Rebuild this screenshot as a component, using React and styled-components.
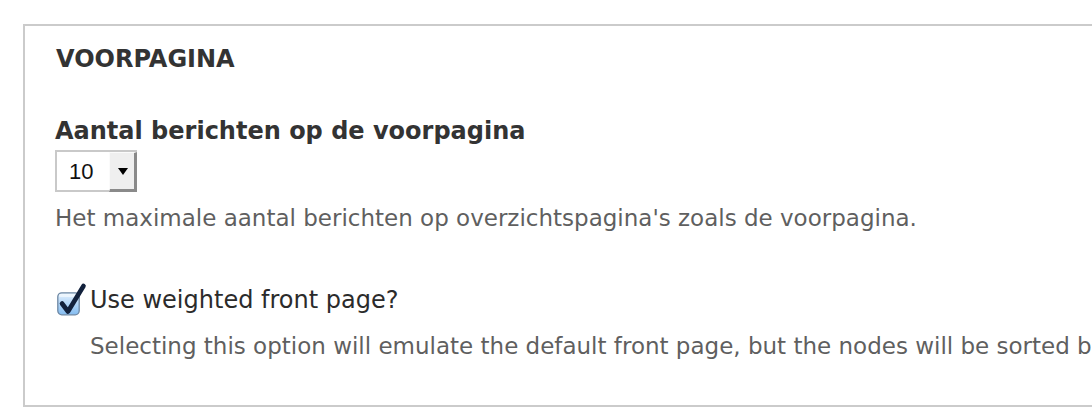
import React, { useState } from 'react';
import styled, { createGlobalStyle } from 'styled-components';

const GlobalStyle = createGlobalStyle`
	html, body {
		margin: 0;
		padding: 0;
		background: #fff;
		overflow: hidden;
	}
	body {
		font-family: 'DejaVu Sans', Verdana, sans-serif;
		color: #333;
	}
`;

const Fieldset = styled.section`
	box-sizing: border-box;
	margin: 24px 0 0 23px;
	width: 1200px;
	border: 2px solid #cbcbcb;
	padding: 18px 30px 44px 30px;
`;

const Legend = styled.h2`
	margin: 0 0 0 1px;
	font-size: 24px;
	line-height: 30px;
	font-weight: bold;
	text-transform: uppercase;
	color: #333;
`;

const FormItem = styled.div`
	margin-top: ${(props) => props.top}px;
`;

const FieldLabel = styled.label`
	display: block;
	font-size: 24px;
	line-height: 30px;
	font-weight: bold;
	color: #333;
`;

const SelectBox = styled.div`
	box-sizing: border-box;
	display: flex;
	margin-top: 4px;
	width: 82px;
	height: 42px;
	border: 2px solid #c9c9c9;
	border-right: 0;
	background: #fff;
`;

const NativeSelect = styled.select`
	flex: 1;
	min-width: 0;
	appearance: none;
	border: 0;
	outline: 0;
	background: transparent;
	padding: 0 0 0 12px;
	font-family: 'Liberation Sans', Arial, sans-serif;
	font-size: 22px;
	color: #111;
`;

const ArrowButton = styled.span`
	box-sizing: border-box;
	display: flex;
	align-items: center;
	justify-content: center;
	width: 28px;
	margin-bottom: -2px;
	background: #efefef;
	border-top: 1px solid #fbfbfb;
	border-left: 1px solid #fbfbfb;
	border-right: 3px solid #8a8a8a;
	border-bottom: 3px solid #8a8a8a;

	&::after {
		content: '';
		border-left: 5px solid transparent;
		border-right: 5px solid transparent;
		border-top: 7px solid #000;
		margin: 1px 0 0 1px;
	}
`;

const Description = styled.div`
	margin-top: ${(props) => props.top}px;
	margin-left: ${(props) => props.indent || 0}px;
	font-size: 23px;
	line-height: 30px;
	color: #5f5f5f;
	white-space: nowrap;
`;

const CheckRow = styled.label`
	display: flex;
	align-items: center;
	margin-top: 52px;
	height: 30px;
	font-size: 24px;
	color: #2b2b2b;
	white-space: nowrap;
	cursor: pointer;
`;

const HiddenInput = styled.input`
	position: absolute;
	opacity: 0;
	width: 0;
	height: 0;
`;

const CheckIcon = styled.svg`
	flex: none;
	margin: 0 5px 0 2px;
	overflow: visible;
`;

function Checkbox({ checked }) {
	return (
		<CheckIcon width='28' height='30' viewBox='0 0 28 30'>
			<defs>
				<linearGradient id='cbFill' x1='0' y1='0' x2='0' y2='1'>
					<stop offset='0' stopColor='#e6f2fd' />
					<stop offset='0.45' stopColor='#b7d8f8' />
					<stop offset='1' stopColor='#84bcf0' />
				</linearGradient>
			</defs>
			<rect
				x='0.8'
				y='7.8'
				width='21.4'
				height='22'
				rx='4'
				fill='url(#cbFill)'
				stroke='#6d87a3'
				strokeWidth='1.3'
			/>
			<rect x='2' y='9' width='19' height='3' rx='1.5' fill='#f4f9fe' opacity='0.7' />
			{checked ? (
				<path
					d='M5 18.5 L11 26.5 L26.5 1'
					fill='none'
					stroke='#12213c'
					strokeWidth='4.6'
					strokeLinecap='round'
					strokeLinejoin='round'
				/>
			) : null}
		</CheckIcon>
	);
}

export default function App() {
	const [count, setCount] = useState('10');
	const [weighted, setWeighted] = useState(true);

	return (
		<>
			<GlobalStyle />
			<Fieldset>
				<Legend>Voorpagina</Legend>

				<FormItem top={42}>
					<FieldLabel htmlFor='edit-default-nodes-main'>
						Aantal berichten op de voorpagina
					</FieldLabel>
					<SelectBox>
						<NativeSelect
							id='edit-default-nodes-main'
							value={count}
							onChange={(e) => setCount(e.target.value)}
						>
							{['1', '2', '3', '4', '5', '6', '7', '8', '9', '10', '15', '20', '25', '30'].map(
								(n) => (
									<option key={n} value={n}>
										{n}
									</option>
								)
							)}
						</NativeSelect>
						<ArrowButton />
					</SelectBox>
					<Description top={11}>
						Het maximale aantal berichten op overzichtspagina's zoals de voorpagina.
					</Description>
				</FormItem>

				<CheckRow>
					<HiddenInput
						type='checkbox'
						checked={weighted}
						onChange={(e) => setWeighted(e.target.checked)}
					/>
					<Checkbox checked={weighted} />
					Use weighted front page?
				</CheckRow>
				<Description top={16} indent={35}>
					Selecting this option will emulate the default front page, but the nodes will be sorted by weight.
				</Description>
			</Fieldset>
		</>
	);
}
